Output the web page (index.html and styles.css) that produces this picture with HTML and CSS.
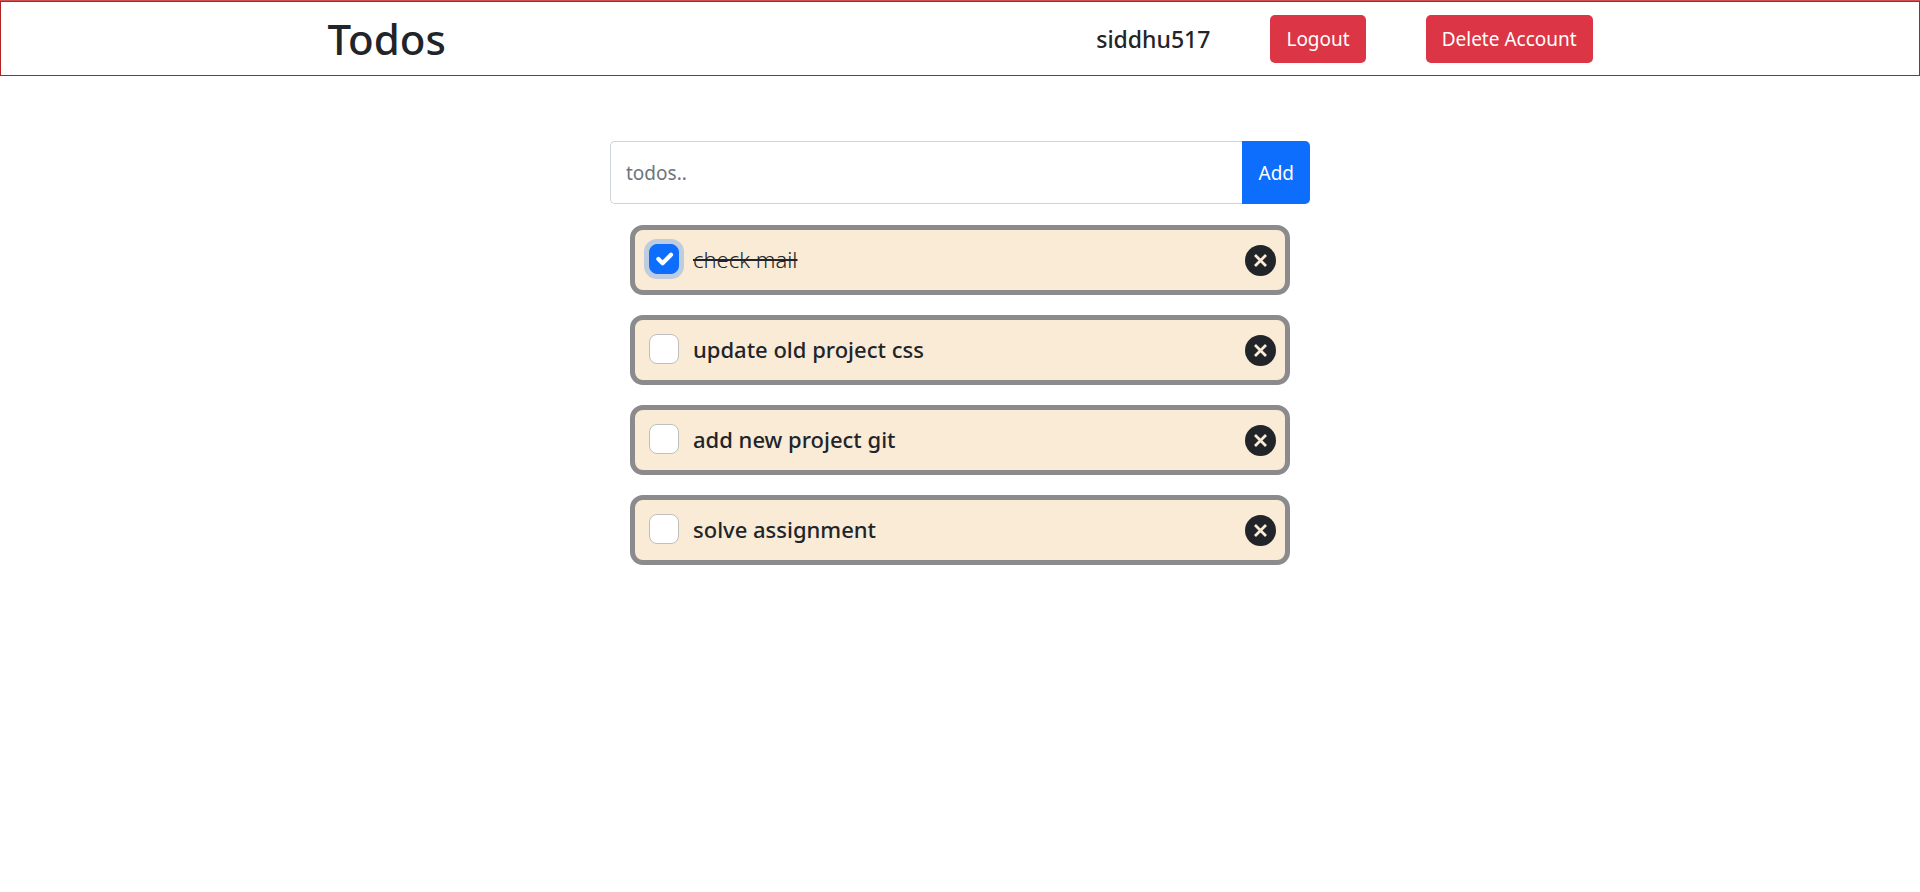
FILE: index.html
```html
<!DOCTYPE html>
<html lang="en">
<head>
<meta charset="utf-8">
<meta name="viewport" content="width=device-width, initial-scale=1">
<title>Todos</title>
<link rel="stylesheet" href="styles.css">
</head>
<body>
<svg class="sprite" aria-hidden="true">
  <symbol id="x-circle" viewBox="0 0 31 31">
    <circle cx="15.5" cy="15.5" r="15.5" fill="#212529"/>
    <path d="M10 10L21 21M21 10L10 21" fill="none" stroke="#faebd7" stroke-width="2.8"/>
  </symbol>
</svg>
<header class="navbar">
  <h1 class="brand">Todos</h1>
  <div class="account">
    <span class="username">siddhu517</span>
    <button class="btn btn-danger" type="button">Logout</button>
    <button class="btn btn-danger" type="button">Delete Account</button>
  </div>
</header>
<main class="content">
  <form class="todo-form">
    <input class="todo-input" type="text" placeholder="todos.." aria-label="New todo">
    <button class="btn btn-add" type="button">Add</button>
  </form>
  <ul class="todo-list">
    <li class="todo">
      <input class="check check-focused" type="checkbox" id="t1" checked>
      <label class="todo-text done" for="t1">check mail</label>
      <button class="remove" type="button" aria-label="Remove check mail"><svg class="icon"><use href="#x-circle"/></svg></button>
    </li>
    <li class="todo">
      <input class="check" type="checkbox" id="t2">
      <label class="todo-text" for="t2">update old project css</label>
      <button class="remove" type="button" aria-label="Remove update old project css"><svg class="icon"><use href="#x-circle"/></svg></button>
    </li>
    <li class="todo">
      <input class="check" type="checkbox" id="t3">
      <label class="todo-text" for="t3">add new project git</label>
      <button class="remove" type="button" aria-label="Remove add new project git"><svg class="icon"><use href="#x-circle"/></svg></button>
    </li>
    <li class="todo">
      <input class="check" type="checkbox" id="t4">
      <label class="todo-text" for="t4">solve assignment</label>
      <button class="remove" type="button" aria-label="Remove solve assignment"><svg class="icon"><use href="#x-circle"/></svg></button>
    </li>
  </ul>
</main>
</body>
</html>
```
FILE: styles.css
```css
*, *::before, *::after {
  box-sizing: border-box;
}

body {
  margin: 0;
  border-top: 1px solid #d05050;
  background: #fff;
  color: #212529;
  font-family: "Segoe UI", "Noto Sans", "Open Sans", sans-serif;
  font-size: 19px;
  line-height: 30px;
}

.sprite {
  display: none;
}

.navbar {
  display: flex;
  align-items: center;
  justify-content: space-between;
  padding: 13px 17% 12px;
  border: 1px solid #b22222;
}

.brand {
  margin: 0;
  font-size: 42px;
  font-weight: 500;
  line-height: 48px;
}

.account {
  display: flex;
  align-items: center;
  gap: 60px;
}

.username {
  font-size: 23px;
  font-weight: 500;
}

.btn {
  border: 0;
  border-radius: 5px;
  padding: 9px 16px;
  color: #fff;
  font: inherit;
  cursor: pointer;
}

.btn-danger {
  background: #dc3545;
}

.content {
  max-width: 700px;
  margin: 65px auto 0;
}

.todo-form {
  display: flex;
}

.todo-input {
  flex: 1;
  min-width: 0;
  height: 63px;
  padding: 0 15px;
  border: 1px solid #ced4da;
  border-right: 0;
  border-radius: 5px 0 0 5px;
  color: inherit;
  font: inherit;
}

.todo-input::placeholder {
  color: #6c757d;
  opacity: 1;
}

.btn-add {
  border-radius: 0 5px 5px 0;
  background: #0d6efd;
}

.todo-list {
  display: flex;
  flex-direction: column;
  gap: 20px;
  margin: 21px 20px 0;
  padding: 0;
  list-style: none;
}

.todo {
  display: flex;
  align-items: center;
  height: 70px;
  padding: 0 9px 0 14px;
  border: 5px solid #8b8a8c;
  border-radius: 13px;
  background: #faebd7;
}

.check {
  flex: none;
  appearance: none;
  width: 30px;
  height: 30px;
  margin: 0 0 2px;
  border: 1px solid #bfbfbf;
  border-radius: 8px;
  background: #fff;
}

.check:checked {
  border-color: #0d6efd;
  background: #0d6efd url("data:image/svg+xml,%3csvg xmlns='http://www.w3.org/2000/svg' viewBox='0 0 20 20'%3e%3cpath fill='none' stroke='%23fff' stroke-linecap='round' stroke-linejoin='round' stroke-width='3' d='M6 10l3 3l6-6'/%3e%3c/svg%3e") center / contain no-repeat;
}

.check-focused {
  box-shadow: 0 0 0 5px rgba(13, 110, 253, 0.25);
}

.todo-text {
  flex: 1;
  padding: 0 0 2px 14px;
  font-size: 22px;
  font-weight: 500;
}

.done {
  font-weight: 300;
  text-decoration: line-through;
  text-decoration-thickness: 2px;
}

.remove {
  display: flex;
  padding: 0;
  border: 0;
  background: none;
  cursor: pointer;
}

.icon {
  width: 31px;
  height: 31px;
}
```
